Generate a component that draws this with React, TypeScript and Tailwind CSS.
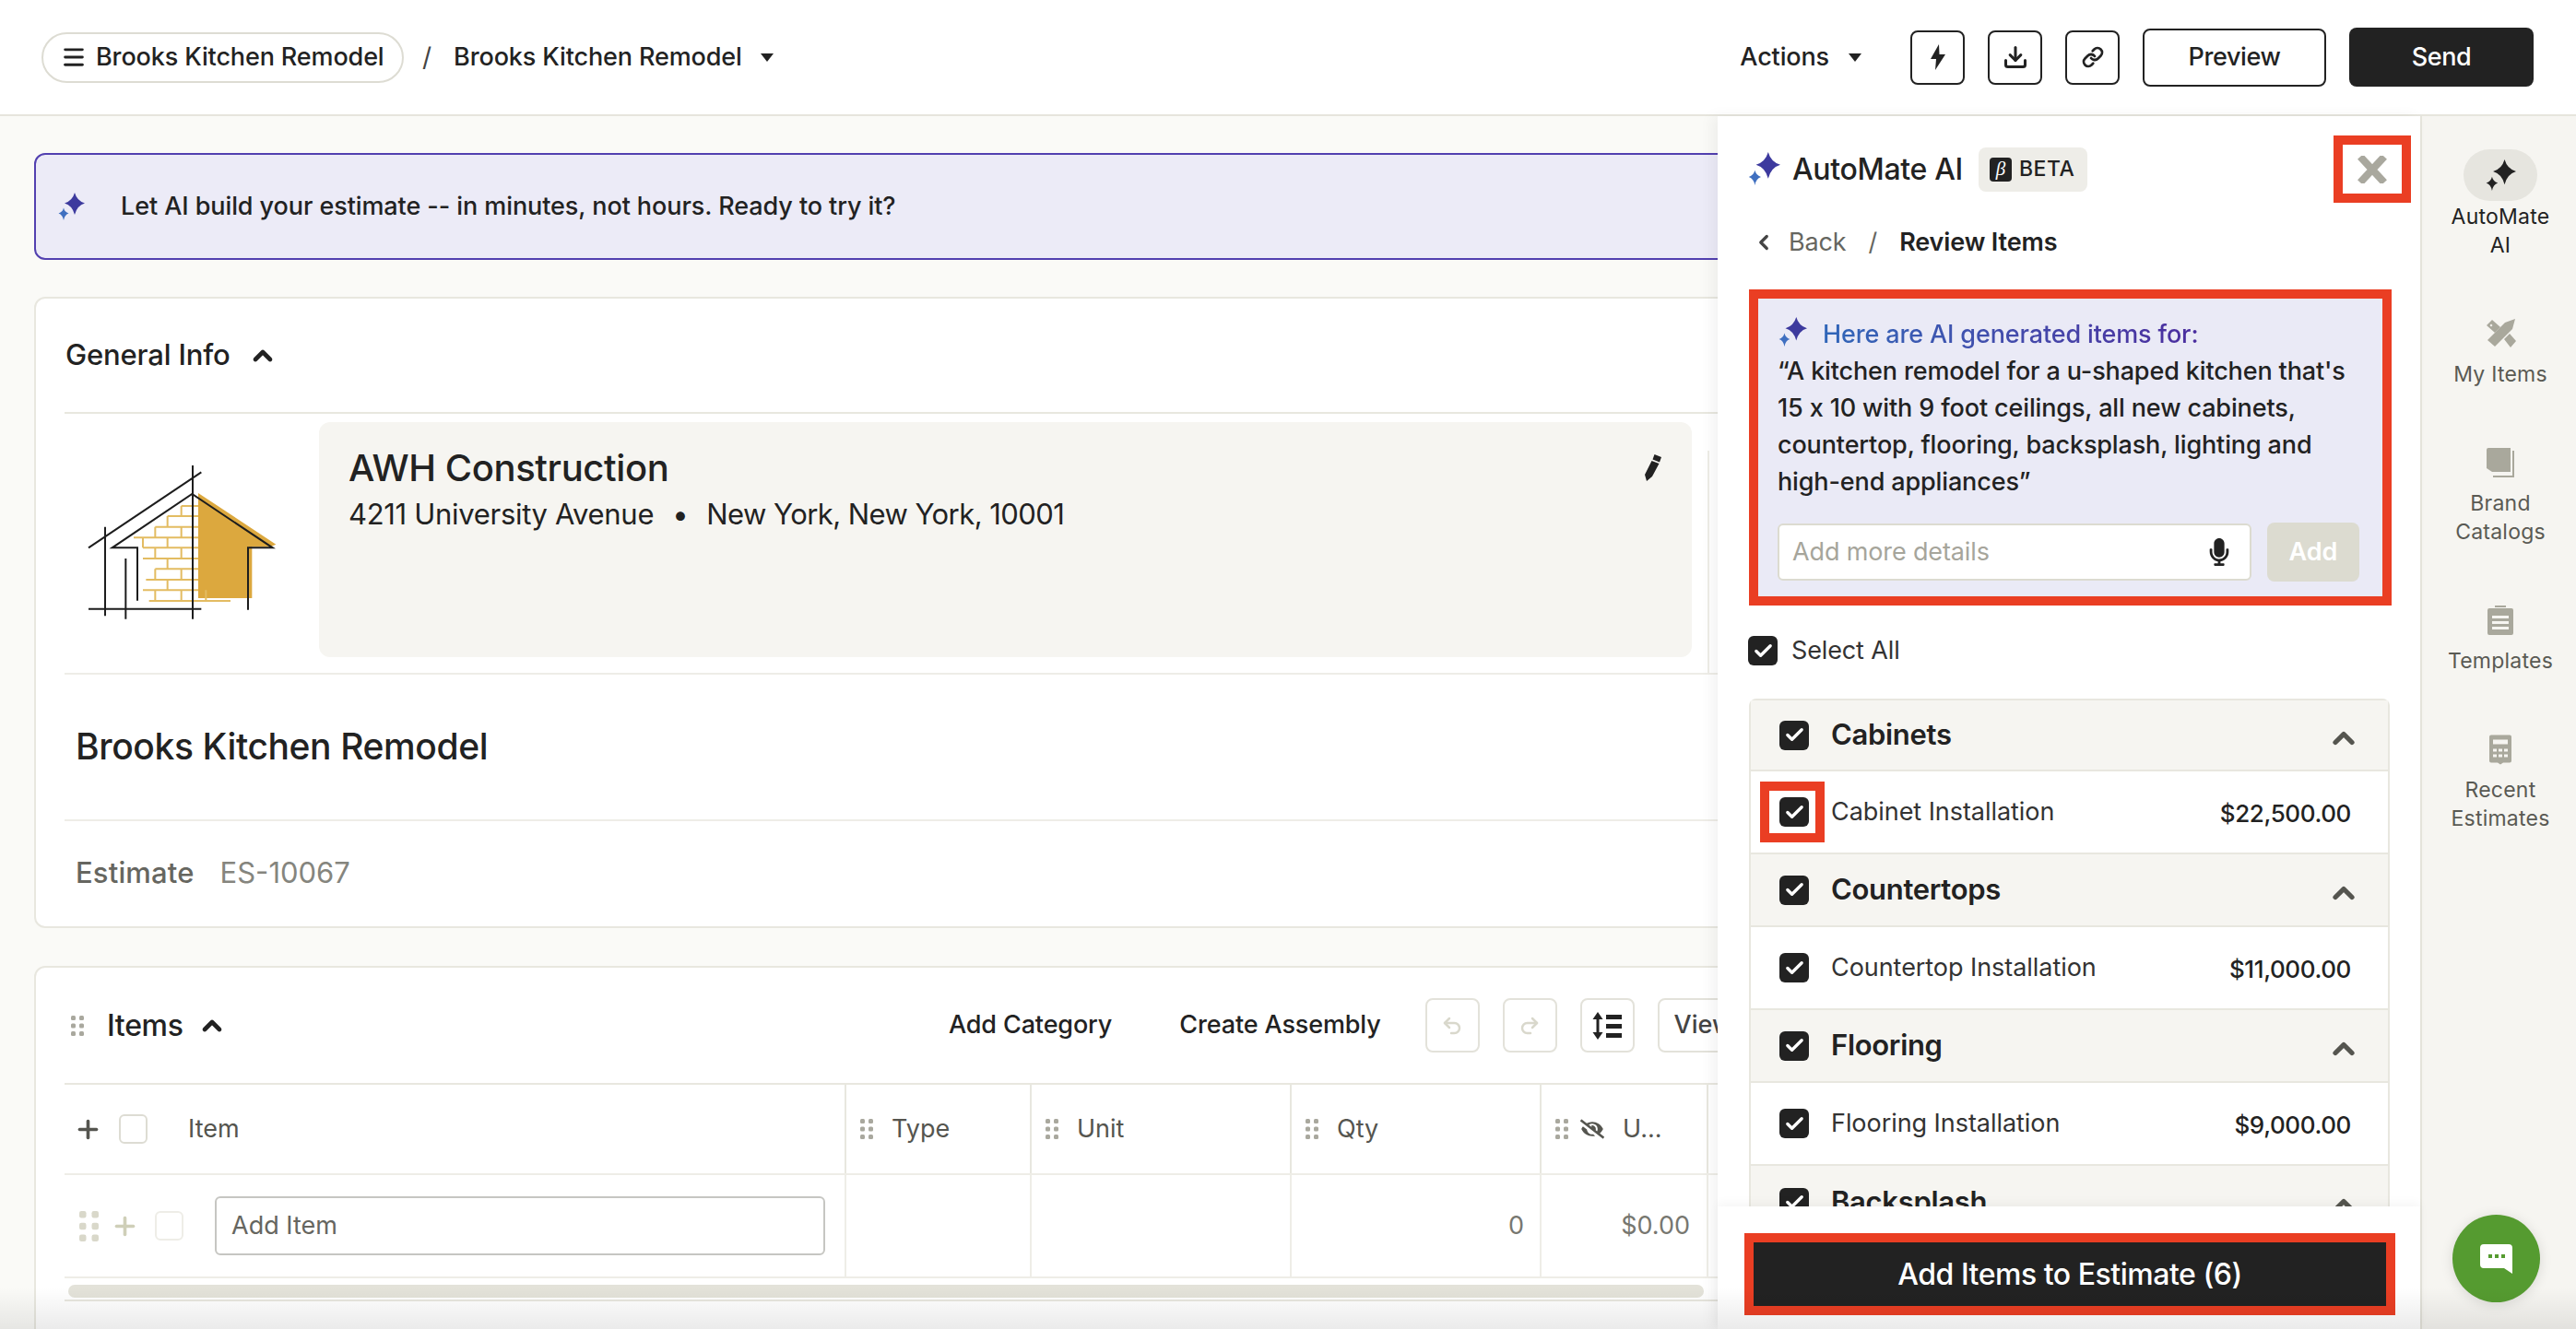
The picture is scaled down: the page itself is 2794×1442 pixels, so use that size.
import React from 'react';
import { Check, ChevronLeft, ChevronUp, Download, Link, Menu, Plus, Redo2, Undo2 } from 'lucide-react';
import { FaEyeSlash, FaMicrophone } from 'react-icons/fa';

const Sparkle = ({ big = '#3d3a9e', small = '#3f6fc0', className = '' }: { big?: string; small?: string; className?: string }) => (
  <svg viewBox="0 0 30 30" className={className}>
    <path fill={big} d="M19 0Q21.5 9 30 11.5 21.5 14 19 24 16.5 14 8 11.5 16.5 9 19 0Z" />
    <path fill={small} d="M7 16.5Q8 21 12.5 22.5 8 24 7 30 6 24 1.5 22.5 6 21 7 16.5Z" />
  </svg>
);

const Caret = () => (
  <svg viewBox="0 0 14 9" className="h-[9px] w-[14px]">
    <path fill="#222" d="M0 0h14L7 9z" />
  </svg>
);

const Grip = ({ large = false }: { large?: boolean }) => (
  <svg viewBox="0 0 14 22" className={large ? 'h-[33px] w-[21px]' : 'h-[22px] w-[14px]'}>
    <g fill={large ? '#d9d8ca' : '#a9a89e'}>
      <rect x="0" y="0" width="5" height="5" rx="1.5" />
      <rect x="9" y="0" width="5" height="5" rx="1.5" />
      <rect x="0" y="8.5" width="5" height="5" rx="1.5" />
      <rect x="9" y="8.5" width="5" height="5" rx="1.5" />
      <rect x="0" y="17" width="5" height="5" rx="1.5" />
      <rect x="9" y="17" width="5" height="5" rx="1.5" />
    </g>
  </svg>
);

const Checked = () => (
  <span className="flex h-[32px] w-[32px] shrink-0 items-center justify-center rounded-[6px] bg-[#222]">
    <Check size={23} strokeWidth={3.5} color="#fff" />
  </span>
);

const Empty = ({ light = false }: { light?: boolean }) => (
  <span className={`block h-[32px] w-[31px] shrink-0 rounded-[6px] border-2 ${light ? 'border-[#eeede7]' : 'border-[#dddcd3]'}`} />
);

const ToolButton = ({ children, muted = false }: { children: React.ReactNode; muted?: boolean }) => (
  <button className={`flex h-[59px] w-[59px] items-center justify-center rounded-[8px] border-2 ${muted ? 'border-[#e3e2da]' : 'border-[#222]'}`}>
    {children}
  </button>
);

const Logo = () => (
  <svg viewBox="0 0 840 660" className="-ml-[10px] mt-[21px] h-[220px] w-[280px] shrink-0">
    <path fill="#dca83e" d="M465 195 718 362 700 370H640V537H465Z" />
    <path
      fill="none"
      stroke="#e3bc62"
      strokeWidth="6"
      d="M410 237H465M365 270H465M325 305H465M255 340H465M285 373H465M285 408H465M325 442H465M295 477H465M285 511H465M305 546H570M410 237V270M365 270V305M325 305V340M410 305V340M285 340V373M365 340V373M325 373V408M410 373V408M365 408V442M325 442V477M410 442V477M365 477V511M325 511V546M410 511V546M490 511V546"
    />
    <path
      fill="none"
      stroke="#1d1d1d"
      strokeWidth="6"
      d="M108 373 475 127M447 105V605M267 545V373H185L445 198 707 373H627V575M162 305V595M229 408V605M108 572H475"
    />
  </svg>
);

const ColumnHead = ({ label, eye = false }: { label: string; eye?: boolean }) => (
  <div className="flex h-full items-center border-r-2 border-[#e8e7df] pl-[15px]">
    <Grip />
    {eye ? <FaEyeSlash size={26} color="#55554f" className="ml-[13px]" /> : null}
    <span className="ml-[20px] text-[27px] text-[#55554f]">{label}</span>
  </div>
);

const groups = [
  { name: 'Cabinets', item: 'Cabinet Installation', price: '$22,500.00' },
  { name: 'Countertops', item: 'Countertop Installation', price: '$11,000.00' },
  { name: 'Flooring', item: 'Flooring Installation', price: '$9,000.00' },
];

const SideItem = ({ label, icon }: { label: string[]; icon: React.ReactNode }) => (
  <div className="flex w-full flex-col items-center">
    <div className="flex h-[34px] items-center justify-center">{icon}</div>
    <div className="mt-[12px] text-center text-[23px] leading-[31px] tracking-[0.01em] text-[#5a5a54]">
      {label.map((l) => (
        <div key={l}>{l}</div>
      ))}
    </div>
  </div>
);

export default function App() {
  return (
    <div className="relative flex h-[1442px] w-[2794px] flex-col overflow-hidden bg-white text-[#222] [font-family:Inter,sans-serif]">
      <header className="flex h-[126px] shrink-0 items-center border-b-2 border-[#e6e5dd] pl-[45px] pr-[46px]">
        <div className="flex h-[55px] w-[393px] items-center rounded-full border-2 border-[#dddcd3] pl-[19px]">
          <Menu size={28} strokeWidth={2.5} />
          <span className="ml-[10px] text-[27px] font-medium tracking-[-0.005em]">Brooks Kitchen Remodel</span>
        </div>
        <span className="ml-[20px] text-[28px] text-[#444]">/</span>
        <span className="ml-[24px] text-[27px] font-medium tracking-[-0.005em]">Brooks Kitchen Remodel</span>
        <span className="ml-[20px]"><Caret /></span>
        <div className="ml-auto flex items-center">
          <span className="text-[27px] font-medium tracking-[-0.005em]">Actions</span>
          <span className="ml-[21px] mr-[53px]"><Caret /></span>
          <div className="flex items-center gap-[25px]">
            <ToolButton>
              <svg viewBox="0 0 16 28" className="h-[28px] w-[16px]"><path fill="#222" d="M9 0 0 16h6l-1 12L16 11H9.5z" /></svg>
            </ToolButton>
            <ToolButton><Download size={28} strokeWidth={2.6} /></ToolButton>
            <ToolButton><Link size={24} strokeWidth={2.8} /></ToolButton>
            <button className="h-[63px] w-[199px] rounded-[8px] border-2 border-[#222] text-[27px] font-medium tracking-[-0.015em]">Preview</button>
            <button className="h-[64px] w-[200px] rounded-[8px] bg-[#222] text-[27px] font-medium tracking-[-0.015em] text-white">Send</button>
          </div>
        </div>
      </header>

      <div className="flex min-h-0 flex-1">
        <main className="w-[1863px] shrink-0 overflow-hidden bg-[#fafaf7] pl-[37px] pt-[40px]">
          <div className="flex h-[116px] w-[1950px] items-center rounded-xl border-2 border-[#5240b0] bg-[#ecebf7] pl-[23px]">
            <Sparkle className="h-[30px] w-[30px]" />
            <span className="ml-[39px] text-[27px] font-medium tracking-[-0.003em]">Let AI build your estimate -- in minutes, not hours. Ready to try it?</span>
          </div>

          <section className="mt-[40px] w-[1950px] rounded-xl border-2 border-[#e8e7df] bg-white pl-[31px]">
            <div className="flex h-[125px] items-center gap-[19px] border-b-2 border-[#e8e7df]">
              <span className="pl-[1px] text-[31px] font-medium tracking-[-0.005em]">General Info</span>
              <ChevronUp size={32} strokeWidth={3.5} />
            </div>
            <div className="flex h-[283px] border-b-2 border-[#eeede7]">
              <div className="w-[276px] shrink-0"><Logo /></div>
              <div className="mt-[9px] flex h-[255px] w-[1489px] shrink-0 justify-between rounded-xl bg-[#f6f5f1] pl-[32px] pr-[33px]">
                <div>
                  <div className="mt-[26px] text-[40px] font-medium leading-[48px] tracking-[-0.01em]">AWH Construction</div>
                  <div className="mt-[6px] flex gap-[20px] text-[31px] leading-[40px] tracking-[-0.01em]">
                    <span>4211 University Avenue</span>
                    <span>•</span>
                    <span className="tracking-[-0.018em]">New York, New York, 10001</span>
                  </div>
                </div>
                <svg viewBox="0 0 18 29" className="mt-[35px] h-[29px] w-[18px]">
                  <path fill="#222" d="M10.5 0 18 3 16 8.5 8.5 5.5ZM7.5 7 15.5 10 8 24 2 29 0 22Z" />
                </svg>
              </div>
              <div className="ml-[17px] mt-[40px] h-[241px] w-[2px] bg-[#eeede7]" />
            </div>
            <div className="flex h-[159px] items-center border-b-2 border-[#eeede7] pl-[12px]">
              <span className="text-[39px] font-medium tracking-[-0.01em]">Brooks Kitchen Remodel</span>
            </div>
            <div className="flex h-[114px] items-center pb-[2px] pl-[12px]">
              <span className="text-[31px] font-medium tracking-[0.005em] text-[#666660]">Estimate</span>
              <span className="ml-[28px] text-[31px] text-[#85857e]">ES-10067</span>
            </div>
          </section>

          <section className="mt-[41px] h-[500px] w-[1950px] rounded-xl border-2 border-[#e8e7df] bg-white pl-[31px]">
            <div className="flex h-[125px] items-center">
              <div className="flex w-[959px] items-center">
                <span className="ml-[7px]"><Grip /></span>
                <span className="ml-[25px] text-[32px] font-medium tracking-[-0.01em]">Items</span>
                <ChevronUp size={32} strokeWidth={3.5} className="ml-[15px]" />
              </div>
              <span className="text-[27px] font-medium tracking-[-0.005em]">Add Category</span>
              <span className="ml-[73px] text-[27px] font-medium tracking-[-0.005em]">Create Assembly</span>
              <div className="ml-[48px] flex items-center gap-[25px]">
                <ToolButton muted><Undo2 size={24} strokeWidth={2.5} color="#d9d8cc" /></ToolButton>
                <ToolButton muted><Redo2 size={24} strokeWidth={2.5} color="#d9d8cc" /></ToolButton>
                <ToolButton muted>
                  <svg viewBox="0 0 32 30" className="h-[30px] w-[32px]">
                    <path fill="#222" d="M6 0 11.5 8H7.5V22H11.5L6 30 .5 22H4.5V8H.5ZM15 3H32V8H15ZM15 13H32V18H15ZM15 23H32V28H15Z" />
                  </svg>
                </ToolButton>
                <button className="h-[59px] w-[120px] rounded-[8px] border-2 border-[#e3e2da] pl-[16px] text-left text-[27px] font-medium text-[#444]">View</button>
              </div>
            </div>
            <div className="grid h-[100px] grid-cols-[848px_201px_282px_271px_181px_1fr] items-center border-y-2 border-b-[#eeede7] border-t-[#e8e7df]">
              <div className="flex h-full items-center border-r-2 border-[#e8e7df] pl-[16px]">
                <Plus size={31} strokeWidth={2.8} color="#55554f" className="-ml-[6px]" />
                <span className="ml-[18px]"><Empty /></span>
                <span className="ml-[44px] text-[27px] text-[#55554f]">Item</span>
              </div>
              <ColumnHead label="Type" />
              <ColumnHead label="Unit" />
              <ColumnHead label="Qty" />
              <ColumnHead label="U..." eye />
              <div />
            </div>
            <div className="grid h-[112px] grid-cols-[848px_201px_282px_271px_181px_1fr] border-b-2 border-[#eeede7]">
              <div className="flex items-center border-r-2 border-[#eeede7] pl-[16px]">
                <Grip large />
                <Plus size={31} strokeWidth={2.8} color="#cfcfb8" className="ml-[13px]" />
                <span className="ml-[17px]"><Empty light /></span>
                <div className="ml-[34px] flex h-[64px] w-[662px] items-center rounded-[6px] border-2 border-[#c6c6c2] pl-[16px] text-[27px] text-[#666660]">Add Item</div>
              </div>
              <div className="border-r-2 border-[#eeede7]" />
              <div className="border-r-2 border-[#eeede7]" />
              <div className="flex items-center justify-end border-r-2 border-[#eeede7] pr-[17px] text-[27px] text-[#777770]">0</div>
              <div className="flex items-center justify-end border-r-2 border-[#eeede7] pr-[18px] text-[27px] text-[#777770]">$0.00</div>
              <div />
            </div>
            <div className="ml-[4px] mt-[7px] h-[14px] w-[1774px] rounded-full bg-[#e3e2d9]" />
            <div className="mt-[2px] h-[2px] bg-[#e8e7df]" />
          </section>
        </main>

        <aside className="z-10 flex w-[762px] shrink-0 flex-col bg-white shadow-[-6px_0_14px_rgba(0,0,0,0.05)]">
          <div className="min-h-0 flex-1 overflow-hidden pl-[32px]">
            <div className="mt-[21px] flex items-center justify-between pr-[10px]">
              <div className="flex items-center">
                <Sparkle className="-mt-[2px] h-[36px] w-[36px]" />
                <span className="ml-[13px] text-[32px] font-medium tracking-[-0.01em]">AutoMate AI</span>
                <span className="ml-[17px] flex h-[48px] w-[118px] items-center rounded-[8px] bg-[#eeede8] pl-[12px]">
                  <span className="flex h-[26px] w-[24px] items-center justify-center rounded-[4px] bg-[#222] text-[21px] italic text-white [font-family:'Liberation_Serif',serif]">β</span>
                  <span className="ml-[8px] text-[23px] font-medium tracking-[0.02em]">BETA</span>
                </span>
              </div>
              <button className="flex h-[73px] w-[84px] items-center justify-center border-[10px] border-[#ea3e23]">
                <svg viewBox="0 0 32 30" className="h-[30px] w-[32px]">
                  <path fill="none" stroke="#a9a89e" strokeWidth="8" d="M3 1 29 29M29 1 3 29" />
                </svg>
              </button>
            </div>
            <div className="mt-[23px] flex h-[40px] items-center pl-[10px] text-[27px] tracking-[-0.005em]">
              <ChevronLeft size={26} strokeWidth={3} color="#444" className="-ml-[5px]" />
              <span className="ml-[14px] text-[#666660]">Back</span>
              <span className="ml-[24px] text-[#666660]">/</span>
              <span className="ml-[24px] font-semibold">Review Items</span>
            </div>

            <div className="ml-[2px] mt-[31px] h-[343px] w-[697px] border-[10px] border-[#ea3e23] bg-[#eaeaf6] pl-[21px] pt-[19px]">
              <div className="flex h-[40px] items-center">
                <Sparkle className="-mt-[6px] h-[32px] w-[32px]" />
                <span className="ml-[17px] bg-linear-to-r from-[#2f66b8] to-[#4a2c9e] bg-clip-text text-[27px] font-medium tracking-[-0.005em] text-transparent">Here are AI generated items for:</span>
              </div>
              <p className="w-[640px] text-[27px] font-medium leading-[40px] tracking-[-0.005em]">
                “A kitchen remodel for a u-shaped kitchen that's 15 x 10 with 9 foot ceilings, all new cabinets, countertop, flooring, backsplash, lighting and high-end appliances”
              </p>
              <div className="mt-[24px] flex items-center gap-[17px]">
                <div className="flex h-[62px] w-[514px] items-center justify-between rounded-[6px] border-2 border-[#dcdbd0] bg-white pl-[14px] pr-[18px]">
                  <span className="text-[27px] tracking-[-0.005em] text-[#a6a59b]">Add more details</span>
                  <FaMicrophone size={30} color="#222" />
                </div>
                <button className="h-[64px] w-[100px] rounded-[8px] bg-[#dcdbd0] text-[27px] font-semibold text-white">Add</button>
              </div>
            </div>

            <div className="ml-[1px] mt-[33px] flex h-[32px] items-center gap-[15px]">
              <Checked />
              <span className="mt-[1px] text-[27px] tracking-[-0.005em] text-[#333]">Select All</span>
            </div>

            <div className="ml-[2px] mt-[36px] w-[695px] rounded-t-lg border-x-2 border-t-2 border-[#e8e7df]">
              {groups.map((g, i) => (
                <div key={g.name}>
                  <div className={`flex ${i === 0 ? 'h-[77px]' : 'h-[79px]'} items-center gap-[24px] border-b-2 border-[#e8e7df] bg-[#f6f5f1] pl-[31px] pr-[30px]`}>
                    <Checked />
                    <span className="text-[31px] font-semibold tracking-[-0.01em]">{g.name}</span>
                    <ChevronUp size={36} strokeWidth={3.5} color="#55554f" className="ml-auto mt-[6px]" />
                  </div>
                  <div className="flex h-[90px] items-center gap-[24px] border-b-2 border-[#e8e7df] pl-[31px] pr-[40px]">
                    <span className="relative">
                      <Checked />
                      {i === 0 ? <span className="absolute -left-[21px] -top-[17px] h-[66px] w-[70px] border-[10px] border-[#ea3e23]" /> : null}
                    </span>
                    <span className="mt-[1px] text-[27px] tracking-[-0.002em] text-[#333]">{g.item}</span>
                    <span className="ml-auto mt-[3px] text-[26px] font-medium tracking-[-0.015em]">{g.price}</span>
                  </div>
                </div>
              ))}
              <div className="flex h-[79px] items-center gap-[24px] bg-[#f6f5f1] pl-[31px] pr-[30px]">
                <Checked />
                <span className="text-[31px] font-semibold tracking-[-0.01em]">Backsplash</span>
                <ChevronUp size={36} strokeWidth={3.5} color="#55554f" className="ml-auto mt-[6px]" />
              </div>
            </div>
          </div>
          <div className="z-10 h-[133px] shrink-0 bg-white pl-[29px] pt-[29px] shadow-[0_-4px_10px_rgba(0,0,0,0.04)]">
            <button className="h-[89px] w-[706px] border-[10px] border-[#ea3e23] bg-[#222] text-[32px] font-medium tracking-[-0.015em] text-white">
              Add Items to Estimate (6)
            </button>
          </div>
        </aside>

        <nav className="relative flex w-[169px] shrink-0 flex-col items-center gap-[63px] border-l-2 border-[#e6e5dd] bg-[#f6f5f1] pl-[3px] pt-[36px]">
          <div className="flex w-full flex-col items-center">
            <div className="flex h-[56px] w-[80px] items-center justify-center rounded-full bg-[#e6e5df]">
              <Sparkle big="#222" small="#222" className="h-[34px] w-[34px]" />
            </div>
            <div className="mt-[2px] text-center text-[23px] leading-[31px] tracking-[0.01em]">
              <div>AutoMate</div>
              <div>AI</div>
            </div>
          </div>
          <SideItem
            label={['My Items']}
            icon={
              <svg viewBox="0 0 33 34" className="h-[34px] w-[33px]">
                <g fill="#a9a89c">
                  <path d="M32 1 29 12 10 31 2 24 21 5Z" />
                  <path fillRule="evenodd" d="M1 8 7 2 16 10 10 16ZM6 6.5 4.5 8 6 9.5 7.5 8ZM20 23 26 17 33 25 27 32Z" />
                </g>
              </svg>
            }
          />
          <SideItem
            label={['Brand', 'Catalogs']}
            icon={
              <svg viewBox="0 0 30 32" className="h-[32px] w-[30px]">
                <path fill="#a9a89c" d="M0 2a2 2 0 0 1 2-2h24v26H6l-6-4Z" />
                <path fill="none" stroke="#a9a89c" strokeWidth="2" d="M29 3v28H7" />
              </svg>
            }
          />
          <SideItem
            label={['Templates']}
            icon={
              <svg viewBox="0 0 28 32" className="h-[32px] w-[28px]">
                <path fill="#a9a89c" fillRule="evenodd" d="M8 0h12v2H8ZM2 3h24a2 2 0 0 1 2 2v25a2 2 0 0 1-2 2H2a2 2 0 0 1-2-2V5a2 2 0 0 1 2-2ZM5 11v3h18v-3ZM5 17v3h18v-3ZM5 23v3h18v-3Z" />
              </svg>
            }
          />
          <SideItem
            label={['Recent', 'Estimates']}
            icon={
              <svg viewBox="0 0 24 32" className="h-[33px] w-[24px]">
                <path fill="#a9a89c" fillRule="evenodd" d="M2 0h20a2 2 0 0 1 2 2v26a2 2 0 0 1-2 2h-7l-3 2-3-2H2a2 2 0 0 1-2-2V2a2 2 0 0 1 2-2ZM4 5v5h16V5ZM4 15v3h4v-3ZM10 15v3h4v-3ZM16 15v3h4v-3ZM4 21v3h4v-3ZM10 21v3h4v-3ZM16 21v3h4v-3Z" />
              </svg>
            }
          />
          <button className="absolute left-[33px] top-[1192px] flex h-[95px] w-[95px] items-center justify-center rounded-full bg-[#559b30] shadow-[0_2px_14px_rgba(0,0,0,0.12)]">
            <svg viewBox="0 0 35 32" className="h-[32px] w-[35px]">
              <path fill="#fff" d="M4 0h27a4 4 0 0 1 4 4v28l-9-6H4a4 4 0 0 1-4-4V4a4 4 0 0 1 4-4Z" />
              <g fill="#559b30"><rect x="9" y="11" width="4" height="4" /><rect x="16" y="11" width="4" height="4" /><rect x="23" y="11" width="4" height="4" /></g>
            </svg>
          </button>
        </nav>
      </div>
      <div className="pointer-events-none absolute bottom-0 left-0 z-20 h-[45px] w-full bg-linear-to-t from-black/8 to-transparent" />
    </div>
  );
}
